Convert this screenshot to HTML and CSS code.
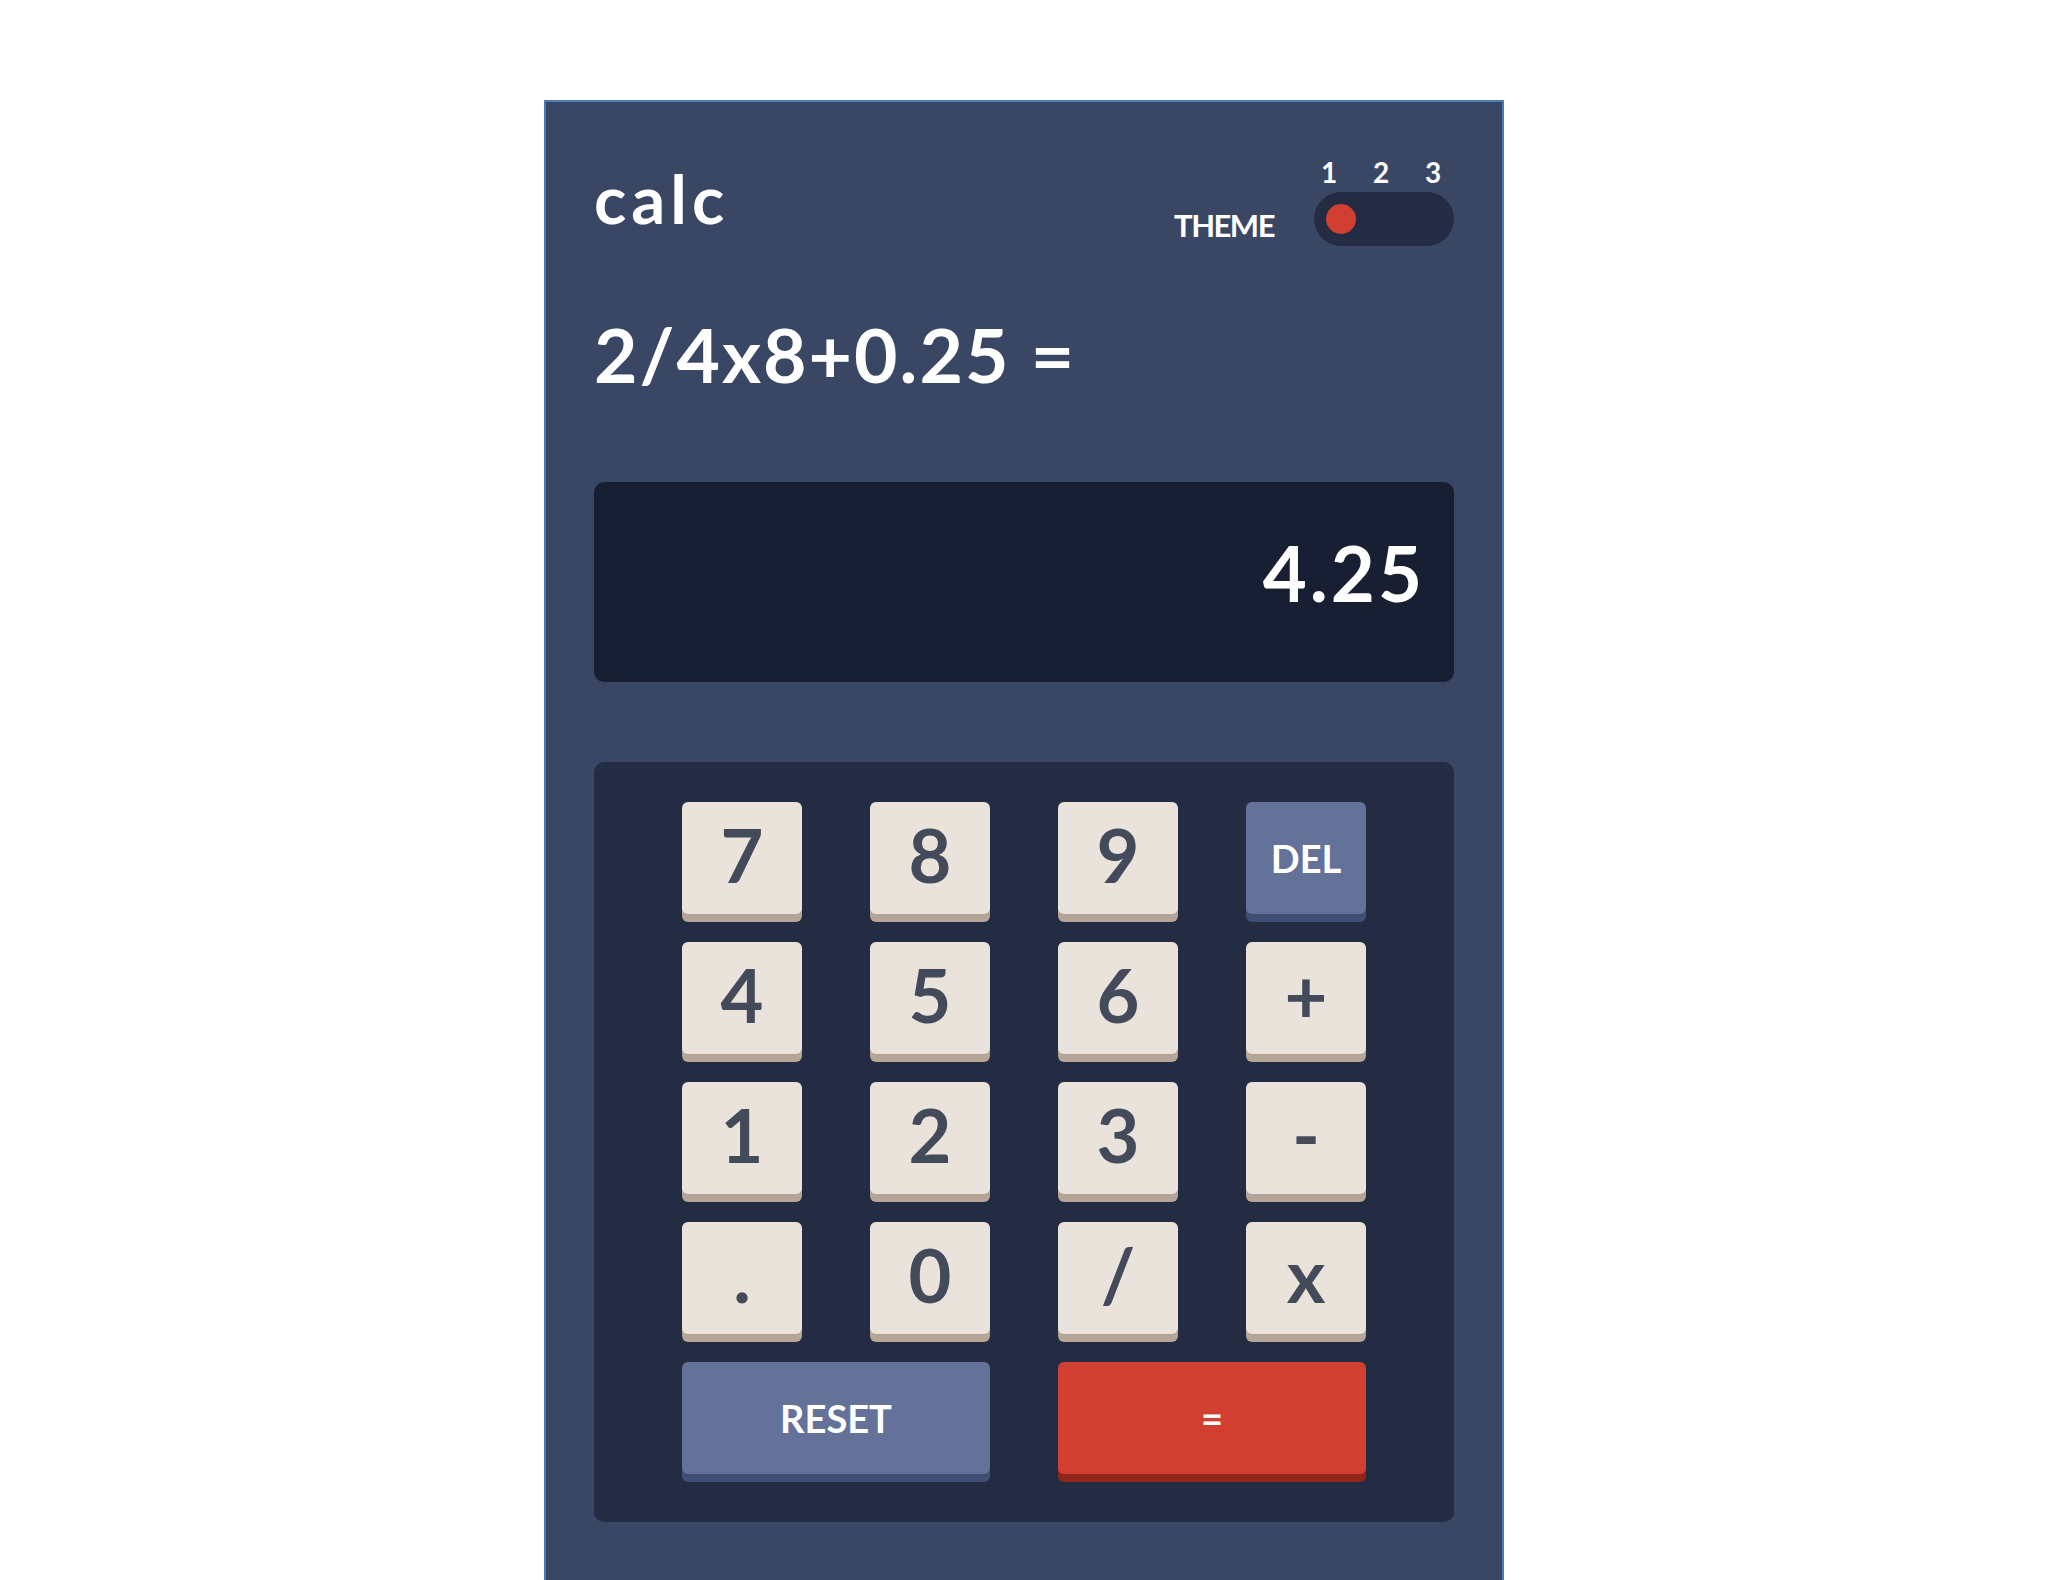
FILE: index.html
```html
<!DOCTYPE html>
<html lang="en">
<head>
<meta charset="utf-8">
<title>calc</title>
<link rel="stylesheet" href="styles.css">
</head>
<body>
<main class="calc">
  <header class="header">
    <h1 class="logo">calc</h1>
    <div class="theme">
      <span class="theme-label">THEME</span>
      <div class="theme-switch">
        <div class="theme-nums"><span>1</span><span>2</span><span>3</span></div>
        <div class="toggle"><span class="knob"></span></div>
      </div>
    </div>
  </header>
  <p class="expression">2/4x8+0.25 =</p>
  <div class="display">4.25</div>
  <div class="keypad">
    <button class="key">7</button>
    <button class="key">8</button>
    <button class="key">9</button>
    <button class="key key-blue">DEL</button>
    <button class="key">4</button>
    <button class="key">5</button>
    <button class="key">6</button>
    <button class="key">+</button>
    <button class="key">1</button>
    <button class="key">2</button>
    <button class="key">3</button>
    <button class="key">-</button>
    <button class="key">.</button>
    <button class="key">0</button>
    <button class="key">/</button>
    <button class="key">x</button>
    <button class="key key-blue key-wide">RESET</button>
    <button class="key key-red key-wide">=</button>
  </div>
</main>
</body>
</html>
```

FILE: styles.css
```css
* { box-sizing: border-box; }

html, body {
  margin: 0;
  padding: 0;
  background: #ffffff;
}

body {
  font-family: "Lato", "Open Sans", sans-serif;
  font-weight: 700;
  color: #ffffff;
}

.calc {
  width: 960px;
  margin: 100px auto 0;
  padding: 56px 48px 80px;
  background: #3a4764;
  border: 2px solid #4b7db5;
  border-bottom: none;
}

.header {
  display: flex;
  justify-content: space-between;
  align-items: flex-end;
}

.logo {
  margin: 0 0 14px;
  font-size: 67px;
  line-height: 1;
  font-weight: 700;
  letter-spacing: 5px;
}

.theme {
  display: flex;
  align-items: flex-end;
  gap: 40px;
}

.theme-label {
  font-size: 31px;
  line-height: 1;
  margin-bottom: 5px;
  letter-spacing: -1.5px;
}

.theme-switch {
  display: flex;
  flex-direction: column;
  gap: 6px;
}

.theme-nums {
  display: grid;
  grid-template-columns: repeat(3, 30px);
  column-gap: 22px;
  justify-items: center;
  font-size: 28px;
  line-height: 1;
}

.toggle {
  width: 140px;
  height: 54px;
  border-radius: 27px;
  background: #232c43;
  padding: 12px;
  display: flex;
  align-items: center;
}

.knob {
  width: 30px;
  height: 30px;
  border-radius: 50%;
  background: #d03f2f;
}

.expression {
  margin: 71px 0 0;
  font-size: 75px;
  line-height: 1;
  letter-spacing: 2px;
}

.display {
  margin-top: 90px;
  height: 200px;
  border-radius: 10px;
  background: #181f33;
  padding: 53px 29px 0;
  text-align: right;
  font-size: 76px;
  line-height: 1;
  letter-spacing: 3px;
}

.keypad {
  margin-top: 80px;
  background: #232c43;
  border-radius: 10px;
  padding: 40px 88px 48px;
  display: grid;
  grid-template-columns: repeat(4, 120px);
  grid-auto-rows: 112px;
  column-gap: 68px;
  row-gap: 28px;
}

.key {
  border: none;
  margin: 0;
  padding: 0 0 6px;
  font-family: inherit;
  font-weight: 700;
  font-size: 74px;
  line-height: 1;
  color: #434a59;
  background: #eae3dc;
  border-radius: 6px;
  box-shadow: 0 8px 0 #b4a597;
  display: flex;
  align-items: center;
  justify-content: center;
}

.key-blue {
  background: #647198;
  box-shadow: 0 8px 0 #414e73;
  color: #ffffff;
  font-size: 38px;
  padding: 0;
}

.key-red {
  background: #d03f2f;
  box-shadow: 0 8px 0 #93261a;
  color: #ffffff;
  font-size: 38px;
  padding: 0;
}

.key-wide {
  grid-column: span 2;
}
```
